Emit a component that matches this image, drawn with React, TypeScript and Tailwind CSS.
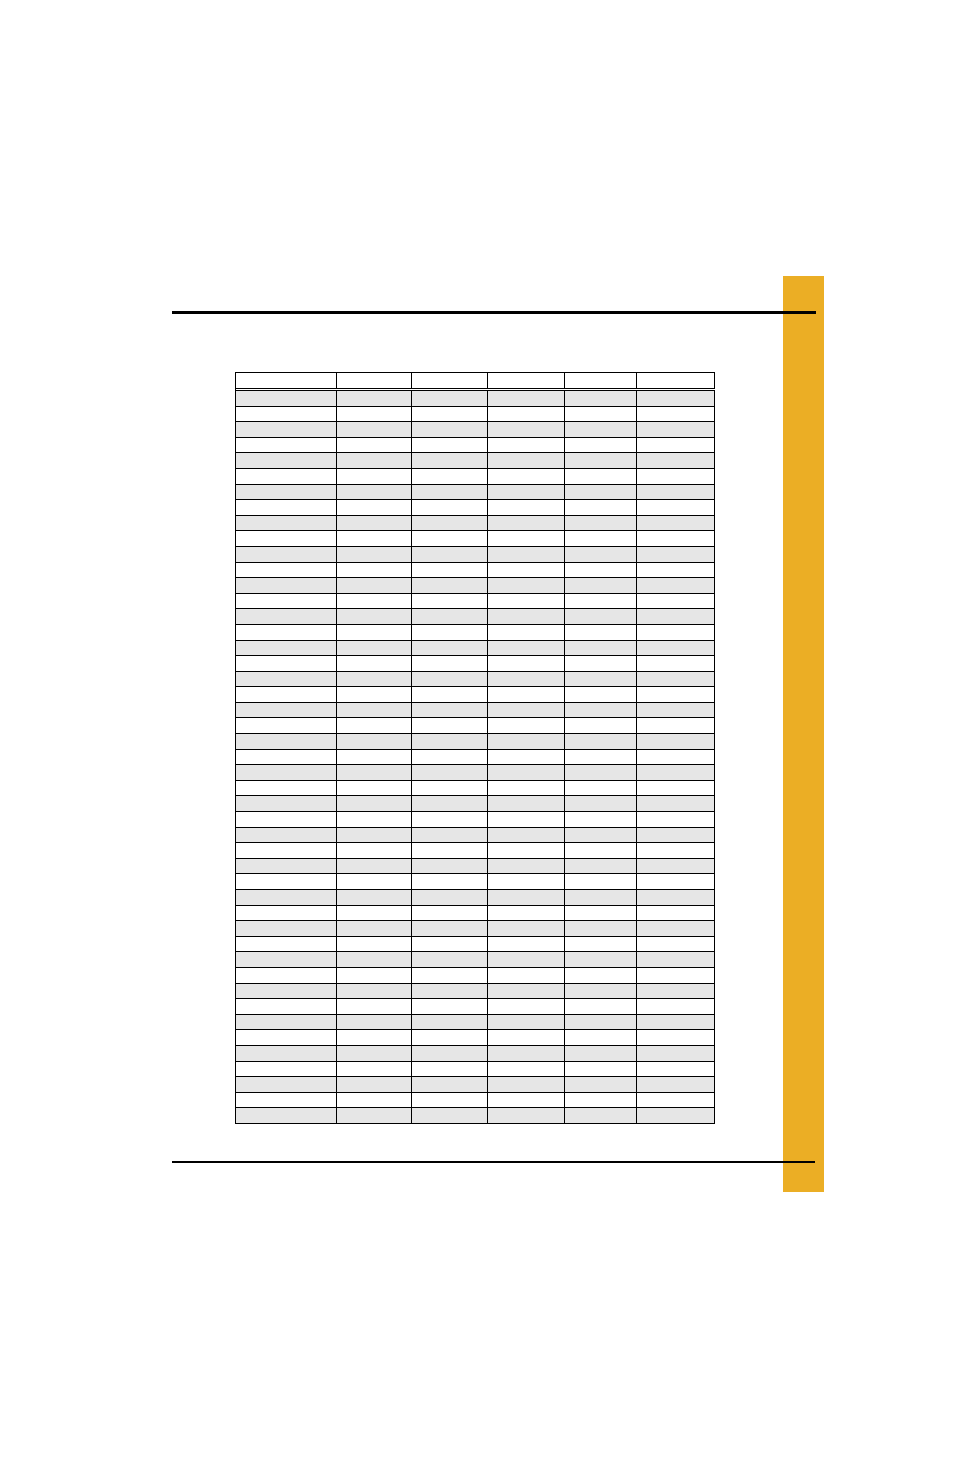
import React from 'react';

// column widths incl. each cell's right border
const colWidths = ['w-[101px]', 'w-[75px]', 'w-[76px]', 'w-[77px]', 'w-[72px]', 'w-[78px]'];

const rowCount = 47;

const Row = ({ shaded, header }: { shaded?: boolean; header?: boolean }) => (
  <div
    className={`flex ${header ? 'h-[18px] border-b-[3px] border-double' : 'h-[15.6px] border-b'} border-black ${
      shaded ? 'bg-[#e6e6e6]' : 'bg-white'
    }`}
  >
    {colWidths.map((w, i) => (
      <div key={i} className={`${w} h-full shrink-0 border-r border-black`} />
    ))}
  </div>
);

const App = () => {
  return (
    <div className="w-[954px] h-[1475px] bg-white overflow-hidden">
      <div className="flex pt-[276px]">
        {/* page body */}
        <div className="ml-[172px] w-[611px] flex flex-col">
          <div className="relative z-10 mt-[35px] h-[3px] w-[644px] bg-black" />

          {/* table */}
          <div className="mt-[58px] ml-[63px] w-[480px] border-l border-t border-black">
            <Row header />
            {Array.from({ length: rowCount }).map((_, i) => (
              <Row key={i} shaded={i % 2 === 0} />
            ))}
          </div>

          <div className="relative z-10 mt-[37px] h-[2px] w-[643px] bg-black" />
        </div>

        {/* side tab */}
        <div className="w-[41px] h-[916px] shrink-0 bg-[#ebae25]" />
      </div>
    </div>
  );
};

export default App;
